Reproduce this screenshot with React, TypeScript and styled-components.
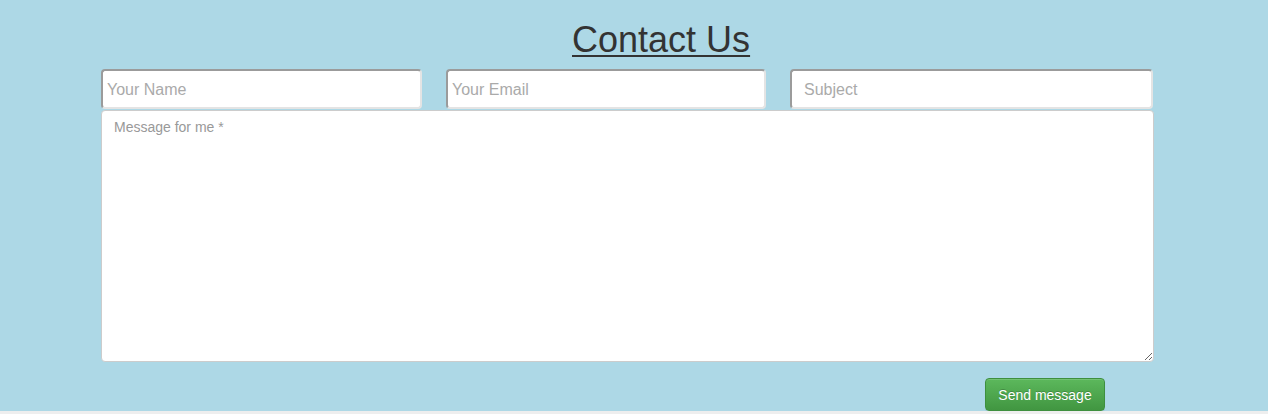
import React from "react";
import styled, { createGlobalStyle } from "styled-components";

const Global = createGlobalStyle`
  html, body { margin: 0; padding: 0; background: #eeeeee; }
  body { font-family: "Liberation Sans", Arial, sans-serif; }
  * { box-sizing: border-box; }
`;

const Section = styled.section`
  background: #add8e6;
  height: 411px;
  padding: 20px 0 0 101px;
`;

const Title = styled.h1`
  margin: 0 0 9px 471px;
  font-size: 36px;
  line-height: 40px;
  font-weight: 400;
  color: #333333;
  text-decoration: underline;
  text-decoration-thickness: 2px;
  text-underline-offset: 3px;
`;

const Form = styled.form`
  width: 1053px;
  display: flex;
  flex-direction: column;
`;

const Row = styled.div`
  display: flex;
  gap: 24px;
`;

const Field = styled.input<{ $w: number; $pad: number }>`
  width: ${(p) => p.$w}px;
  height: 40px;
  padding: 1px 0 0 ${(p) => p.$pad}px;
  border-style: solid;
  border-width: 2px;
  border-color: #9b9b9b #e4e4e4 #e4e4e4 #9b9b9b;
  border-radius: 4px;
  background: #fff;
  font-family: "Liberation Sans", Arial, sans-serif;
  font-size: 16px;
  color: #333;
  outline: none;
  &::placeholder { color: #aaaaaa; }
`;

const Message = styled.textarea`
  margin-top: 1px;
  width: 1053px;
  height: 252px;
  padding: 7px 12px;
  border: 1px solid #cccccc;
  border-radius: 4px;
  background: #fff;
  font-family: "Liberation Sans", Arial, sans-serif;
  font-size: 14px;
  line-height: 18px;
  color: #333;
  outline: none;
  resize: both;
  &::placeholder { color: #999999; }
`;

const Actions = styled.div`
  display: flex;
  justify-content: flex-end;
  padding: 16px 49px 0 0;
`;

const SendButton = styled.button`
  width: 120px;
  height: 33px;
  padding: 6px 12px;
  border: 1px solid #3e8f3e;
  border-radius: 4px;
  background: linear-gradient(to bottom, #5cb85c 0%, #419641 100%);
  box-shadow: inset 0 1px 0 rgba(255, 255, 255, 0.15), 0 1px 1px rgba(0, 0, 0, 0.075);
  color: #ffffff;
  font-family: "Liberation Sans", Arial, sans-serif;
  font-size: 14px;
  line-height: 20px;
  text-shadow: 0 -1px 0 rgba(0, 0, 0, 0.2);
  cursor: pointer;
`;

export default function App() {
  return (
    <>
      <Global />
      <Section>
        <Title>Contact Us</Title>
        <Form onSubmit={(e) => e.preventDefault()}>
          <Row>
            <Field $w={321} $pad={4} placeholder="Your Name" />
            <Field $w={320} $pad={4} placeholder="Your Email" />
            <Field $w={363} $pad={12} placeholder="Subject" />
          </Row>
          <Message placeholder="Message for me *" />
          <Actions>
            <SendButton type="submit">Send message</SendButton>
          </Actions>
        </Form>
      </Section>
    </>
  );
}
